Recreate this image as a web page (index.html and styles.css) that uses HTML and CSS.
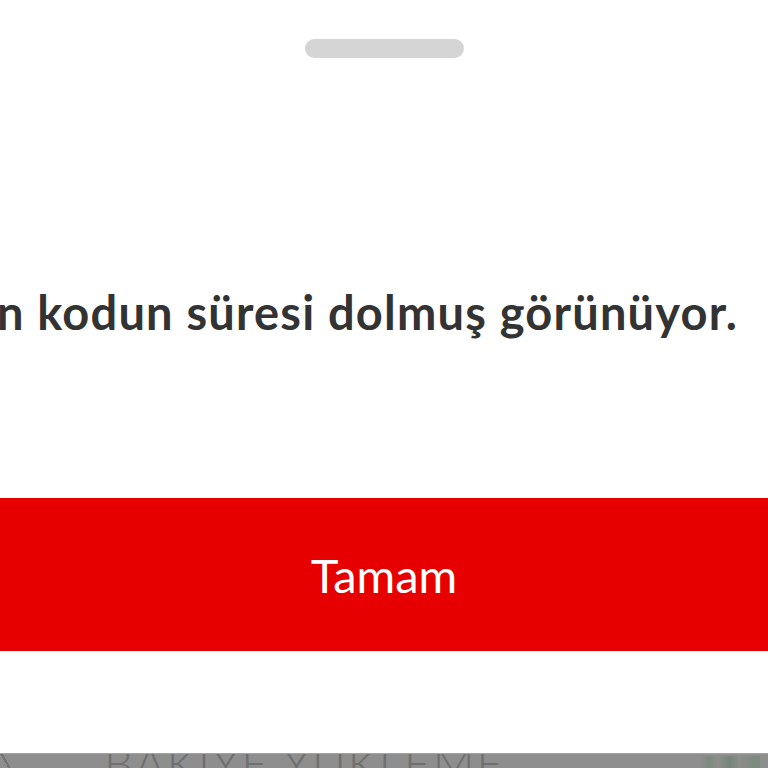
FILE: index.html
```html
<!DOCTYPE html>
<html lang="tr">
<head>
<meta charset="utf-8">
<title>Kod süresi</title>
<link rel="stylesheet" href="styles.css">
</head>
<body>
<div class="screen">
  <div class="sheet">
    <div class="grabber"></div>
    <div class="message"><p class="message-text">Girdiğin kodun süresi dolmuş görünüyor.</p></div>
    <button class="ok-button">Tamam</button>
  </div>
  <div class="behind">
    <span class="behind-mark"></span>
    <span class="behind-title">BAKİYE YÜKLEME</span>
    <span class="behind-icon"></span>
  </div>
</div>
</body>
</html>
```
FILE: styles.css
```css
html, body {
  margin: 0;
  padding: 0;
  background: #ffffff;
}
.screen {
  width: 768px;
  height: 768px;
  overflow: hidden;
  display: flex;
  flex-direction: column;
  font-family: Lato, "Liberation Sans", sans-serif;
}
.sheet {
  height: 753px;
  background: #ffffff;
  display: flex;
  flex-direction: column;
  align-items: center;
}
.grabber {
  margin-top: 39px;
  width: 159px;
  height: 19px;
  border-radius: 10px;
  background: #d5d5d5;
}
.message {
  align-self: stretch;
  height: 440px;
  display: flex;
  justify-content: flex-end;
  align-items: flex-start;
  padding-right: 30px;
  overflow: hidden;
}
.message-text {
  margin: 224px 0 0;
  white-space: nowrap;
  font-size: 47px;
  font-weight: 700;
  letter-spacing: 1.2px;
  line-height: 60px;
  color: #333333;
}
.ok-button {
  align-self: stretch;
  height: 153px;
  border: 0;
  margin: 0;
  background: #e60000;
  color: #ffffff;
  font-family: Lato, "Liberation Sans", sans-serif;
  font-size: 47px;
  font-weight: 400;
  padding: 0;
}
.behind {
  flex: 1;
  background: #8e8e8e;
  border-top: 1px solid #a4a4a4;
  display: flex;
  align-items: flex-start;
  overflow: hidden;
  position: relative;
}
.behind-title {
  margin-left: 104px;
  margin-top: -14px;
  font-size: 46px;
  font-weight: 300;
  line-height: 46px;
  letter-spacing: 2px;
  color: #6f6f6f;
}
.behind-mark {
  position: absolute;
  left: 0;
  top: 0;
  width: 10px;
  height: 14px;
  background: linear-gradient(60deg, transparent 45%, #747474 46%, #747474 60%, transparent 61%);
}
.behind-icon {
  position: absolute;
  left: 700px;
  top: 2px;
  width: 60px;
  height: 14px;
  background: linear-gradient(90deg, #8e8e8e 0, #7d8a7d 15%, #8e8e8e 30%, #74857a 50%, #8e8e8e 65%, #7c8a7f 90%);
}
```
